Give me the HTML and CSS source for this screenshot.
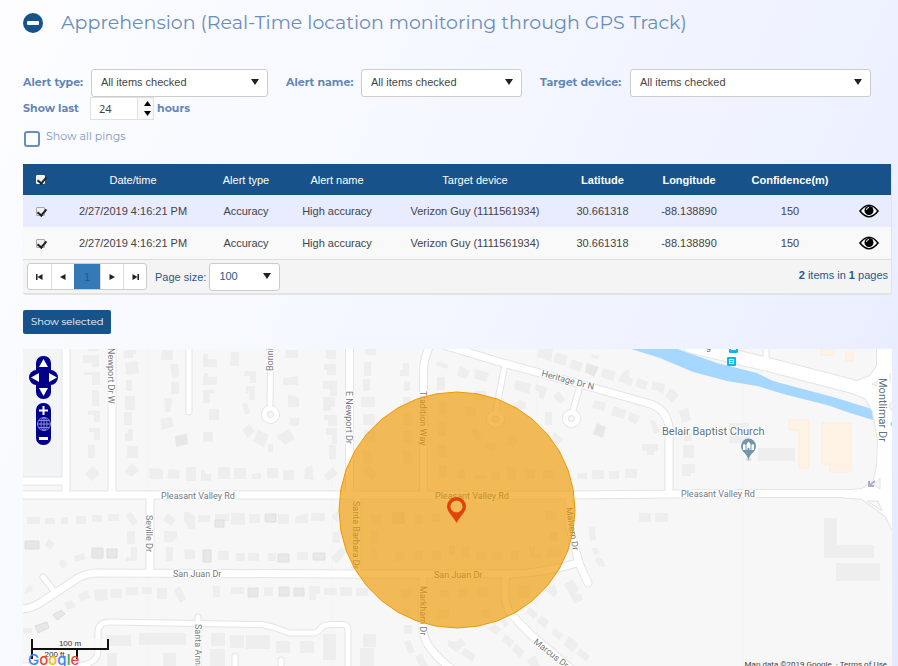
FILE: index.html
```html
<!DOCTYPE html>
<html lang="en">
<head>
<meta charset="utf-8">
<title>Apprehension</title>
<link rel="stylesheet" href="styles.css">
</head>
<body>
<header class="heading">
  <button class="collapse" type="button" aria-label="Collapse section">
    <svg width="20" height="20" viewBox="0 0 20 20"><circle cx="10" cy="10" r="10" fill="#15538a"/><rect x="4" y="8" width="12" height="4" rx="1" fill="#fff"/></svg>
  </button>
  <h1>Apprehension (Real-Time location monitoring through GPS Track)</h1>
</header>

<form class="filters">
  <div class="filter-row">
    <div class="field field-type">
      <label for="alert-type">Alert type:</label>
      <span class="select"><select id="alert-type"><option>All items checked</option></select></span>
    </div>
    <div class="field field-name">
      <label for="alert-name">Alert name:</label>
      <span class="select"><select id="alert-name"><option>All items checked</option></select></span>
    </div>
    <div class="field field-device">
      <label for="target-device">Target device:</label>
      <span class="select"><select id="target-device"><option>All items checked</option></select></span>
    </div>
  </div>
  <div class="last-row">
    <label for="hours">Show last</label>
    <input id="hours" type="text" inputmode="numeric" value="24">
    <span class="spinner">
      <button type="button" aria-label="Increase"><svg width="7" height="5" viewBox="0 0 7 5"><path d="M3.5 0 7 5H0z"/></svg></button>
      <button type="button" aria-label="Decrease"><svg width="7" height="5" viewBox="0 0 7 5"><path d="M0 0h7L3.5 5z"/></svg></button>
    </span>
    <span class="unit">hours</span>
  </div>
  <div class="ping-row">
    <input id="pings" type="checkbox">
    <label for="pings">Show all pings</label>
  </div>
</form>

<section class="grid">
  <table>
    <colgroup>
      <col class="c-check"><col class="c-date"><col class="c-type"><col class="c-name"><col class="c-device"><col class="c-lat"><col class="c-long"><col class="c-conf"><col class="c-view">
    </colgroup>
    <thead>
      <tr>
        <th><input class="tick" type="checkbox" checked aria-label="Select all"></th>
        <th>Date/time</th><th>Alert type</th><th>Alert name</th><th>Target device</th>
        <th class="strong">Latitude</th><th class="strong">Longitude</th><th class="strong">Confidence(m)</th><th></th>
      </tr>
    </thead>
    <tbody>
      <tr>
        <td><input class="tick" type="checkbox" checked aria-label="Select row 1"></td>
        <td>2/27/2019 4:16:21 PM</td><td>Accuracy</td><td>High accuracy</td><td>Verizon Guy (1111561934)</td>
        <td>30.661318</td><td>-88.138890</td><td>150</td>
        <td><button class="view" type="button" aria-label="View"><svg width="20" height="14" viewBox="0 0 20 14"><path d="M1 7Q10-4.5 19 7 10 18.5 1 7z" fill="#fff" stroke="#000" stroke-width="1.6"/><circle cx="10" cy="6.500" r="4.500"/><path d="M7.5 6a2.500 2.500 0 0 1 2.500-2.500" fill="none" stroke="#fff"/></svg></button></td>
      </tr>
      <tr>
        <td><input class="tick" type="checkbox" checked aria-label="Select row 2"></td>
        <td>2/27/2019 4:16:21 PM</td><td>Accuracy</td><td>High accuracy</td><td>Verizon Guy (1111561934)</td>
        <td>30.661318</td><td>-88.138890</td><td>150</td>
        <td><button class="view" type="button" aria-label="View"><svg width="20" height="14" viewBox="0 0 20 14"><path d="M1 7Q10-4.5 19 7 10 18.5 1 7z" fill="#fff" stroke="#000" stroke-width="1.6"/><circle cx="10" cy="6.500" r="4.500"/><path d="M7.5 6a2.500 2.500 0 0 1 2.500-2.500" fill="none" stroke="#fff"/></svg></button></td>
      </tr>
    </tbody>
  </table>
  <footer class="pager">
    <nav class="pages" aria-label="Pages">
      <button type="button" aria-label="First page"><svg width="7" height="6" viewBox="0 0 7 6"><path d="M0 0h1.500v6H0zM6.500 0v6L1.500 3z"/></svg></button>
      <button type="button" aria-label="Previous page"><svg width="6" height="6" viewBox="0 0 6 6"><path d="M5.500 0v6L0 3z"/></svg></button>
      <button type="button" class="current">1</button>
      <button type="button" aria-label="Next page"><svg width="6" height="6" viewBox="0 0 6 6"><path d="M.5 0v6L6 3z"/></svg></button>
      <button type="button" aria-label="Last page"><svg width="7" height="6" viewBox="0 0 7 6"><path d="M5.500 0H7v6H5.500zM.5 0v6L5.500 3z"/></svg></button>
    </nav>
    <label for="page-size">Page size:</label>
    <span class="select size"><select id="page-size"><option>100</option></select></span>
    <p class="total"><b>2</b> items in <b>1</b> pages</p>
  </footer>
</section>

<button class="show" type="button">Show selected</button>

<section class="map" aria-label="Map">
  <svg class="tiles" viewBox="23 349 869 317" preserveAspectRatio="xMinYMin slice">
    <defs>
      <g id="minor">
        <path d="M189 340V412M271 340 270 405M505 364 496 411M580 386 573 410M43 577 54 591M766 345V365M198 617V680M235 656V680M281 660V680"/>
        <path d="M23 666H72Q98 666 98 650V631Q99 622 110 622L262 624.500Q275 627 289 633H313Q318 633 322 627 325 624 335 624.500H344Q348 625 348 630V680"/>
      </g>
      <g id="major">
        <path d="M66 340V495M112 340V495M20 481H66M20 495H574L720 493.500H865M150 495V573M349.500 340V495M357 495V574M423.500 495V375Q423 360 430 345M569 495V525L579 563 588 583M669 493V428Q667 408 647 403L573 382 503 363 440 344"/>
        <path d="M20 609Q32 609 43 601L72 582Q83 573 98 573L350 574H510Q545 573 577 563M423 574V630Q424 650 460 675M506 574Q502 605 512 615L530 634 575 672"/>
      </g>
      <path id="avenue" d="M690 346 770 365 870 391"/>
      <path id="junction" d="M877 340V366L870 376 857 381 850 392 866 399 873 412 878 440 877 465 874 480 862 489 840 491V497L862 499 880 512 886 517 895 535V340z"/>
    </defs>
    <rect x="20" y="340" width="1400" height="900" fill="#f7f7f7"/>
    <path d="M23 340H62V477H23z" fill="#f2f4f6"/>
    <path d="M148 349V900M332 349V900M537 349V900M743 349V900" stroke="#f3f3f3"/>

    <g fill="#eee">
      <path d="M88 349h10v2H88zM83 355h16v12H92v-4h-9zM84 372h16v13h-8v-10h-8zM92 390h7v16h-7zM88 411h12v11h-6v-7h-6zM89 428h11v12h-6v-8h-5zM88 445h7v13h-7zM93 466l7 8-8 7-7-7z"/>
      <path d="M124 350h12v4h-3v4h-10zM125 363l13-2 1 12-13 2zM126 380h6v11h-6zM125 396h10v14H125zM124 412h8v13h-8zM128 429h5v12h-8v-8h3zM127 446h11v12h-11zM132 463l7 8-8 6-6-6zM149 468l14 1v10h-13zM169 469l11 1-1 9-12-1zM186 467h10v14h-10zM201 470h4v4h6v7h-10zM218 467h12v12h-12z"/>
      <path d="M162 350h11v10h-12zM170 364h8l1 13-7 1zM171 382h8v12h-8zM164 398h8v6l-2 8h-5zM160 419l11-2 3 9-12 4zM203 354h5v5h9v8h-14zM204 373h4v4h9v8h-14zM203 390h12v3h-5v10h-7zM209 409h10v11h-10zM203 432h10v10h-10z"/>
      <path d="M175 436l12-2 1 10-12 3z" fill="#e7e7e7"/>
      <path d="M231 352h8v14h-9zM245 371h11v12h-6v-7h-6zM246 386h9v14h-6v-7h-3zM242 404l5-1 3 10-5 2zM242 430l7-6 6 7-7 7zM258 430l11 5-5 12-11-6zM276 436l13-7 6 10-10 6zM290 418h9v6l-4 3-6-3zM268 444h5v8h-5zM286 350h12v8h-13zM283 378l15-2v9h-15zM288 395l11 2v10h-11z"/>
      <path d="M234 468h12v11h-12zM252 474l9-1v6h-9zM267 468h11v10h-11zM283 470h11v10h-11zM305 468l7-3 2 15-10-1zM324 475l9-8 5 7-10 7z"/>
      <path d="M326 350h10v9h-10zM324 364h12v11h-9v-5h-3zM323 381h14v15h-7v-7h-7zM323 397h12v10h-4v4h-8zM324 415h13v11h-9v-6h-4zM326 428h11v16h-5v-9h-6zM329 445h7v14h-7zM365 349h11v6h-10zM364 362h7v14h-7zM363 379h7v12h-7zM361 397h14v10h-14zM363 414h12v11h-12zM364 430h11v12h-11zM363 450h8v14h-8zM368 465l10 9-5 6-10-9zM403 363h6v13h-9v-6h3zM404 381l6 1v9h-6zM403 397h8v11h-8zM403 414h8v11h-8zM403 431h8v12h-8zM403 450h8v14h-8z"/>
      <path d="M437 361l12 4-2 4-11-4zM437 377h8v13h-8zM439 402h8v12h-8zM438 422h8v14h-8zM438 445h8v12h-8zM439 465h8v12h-8zM460 366l10 5-4 8-9-4zM475 369l14 4-3 9-12-4zM474 391h12v9h-12zM466 407h10v9h-10zM470 430l7-2 5 10-7 3zM486 442l11 2-3 7-9-2zM508 439l5-4 5 6-5 7-6-4zM516 380l15 4-2 10-15-5zM536 384l12 4-5 12-4-2v-6l-4-2zM553 396l6-5 6 9-5 4zM513 404l7-4 6 3v6h-14zM545 412h7v13h-7zM554 432l9 7-5 6-8-5z"/>
      <path d="M539 349h14l-2 12-14-4zM556 352l12 4-3 10-12-4zM572 359l11 4-3 9-11-4zM603 368l13 4-3 9-12-4zM623 372l7-3-1 8 4 2-2 7-13-5zM638 378l10 4-3 8-10-4zM653 381l12 3-2 9-12-4zM592 354l7 2v3l-8-1zM595 400l11 3-2 8-12-3zM614 406l13 4-4 9-12-4zM630 412l10 4-4 9-8-5zM650 420l5 1 5 11-6 2zM642 444h16v7h-4v4h-7v-4h-5z"/>
      <path d="M587 363l12 4-5 10-9-5zM597 423l9 4-3 11-10-4z" fill="#e7e7e7"/>
      <path d="M458 470h7v9h-7zM475 475h12v4h-12zM491 472h9v8h-9zM507 467h9v13h-9zM525 469h10v10h-10zM543 470h11v9h-11zM577 473h10v6h-10zM592 470h12v9h-12zM609 471h10v8h-10zM625 469h12v9h-12z"/>
      <path d="M671 388l8 7-7 8-7-7zM659 383l6 3-1 5-5-1zM679 411l9-3 3 12-9 3zM684 433h8v8h-8zM683 445h11v13h-11zM682 464h13v9h-4v3h-9zM729 423h20v20h-20zM758 448h37v13h-37z"/>
      <path d="M27 517h13v7H27zM45 518h10v6H45zM61 517h7v7h-7zM76 516h10v8H76zM92 515h10v7H92zM108 514h11v7h-11zM126 515l5-3 7 10-6 4zM127 531h8v13h-8zM131 547h6v14h-11v-4h5zM49 539l6 5-5 6-5-5zM62 559l6 5-5 4-5-4zM74 556l10-3 2 6-11 3zM26 589l5-4 2 5-8 4zM168 513l8 7-5 6-8-6zM184 512h6l5 5v12h-6l-5-9zM198 515h12v7h-12zM215 514h14v7h-14zM164 531h13v6l-4 5h-9zM166 547h7v14h-7zM184 549l11 1v9h-10zM218 551h11v9h-11z"/>
      <path d="M25 541h14v8H25zM92 548h11v10H92zM107 549h10v9h-10zM53 615l8-5 4 4-8 6zM35 626l12-4 2 6-11 5zM203 550h8v12h-8zM215 520h9v7h-9z" fill="#e7e7e7" stroke="#dedede"/>
      <path d="M64 603l8-3 4 7-9 3zM78 595l9-5 4 8-10 3zM94 590l13-1 1 11-13 1zM110 589h12v9h-11zM126 587h12v8h-12zM142 587h10v7h-10zM157 588h10v11h-10zM174 590l6-4 6 13-6 4zM213 586h7v11h-7zM23 628h9v5h-9zM106 635h25v11h-25zM139 633h47v12h-47zM211 633h14v13h-14zM210 649h15v17h-15zM107 653h10v13h-10zM163 653h13v13h-13z"/>
      <path d="M231 513h14v12h-14zM249 514h11v9h-11zM278 514h11v10h-11zM295 517l13-4v10h-13zM311 513h14v8h-14zM332 515l6-4v12l-6-5zM333 532h7v11h-7zM236 553h9v8h-9zM248 553h11v8h-11zM268 553h8v8h-8zM297 552h11v8h-11zM331 558l10-11 5 5-9 12zM371 515l10-2v12l-10-2zM370 530h8v14h-8zM370 548l5-1 3 12-5 1zM395 552h8v9h-8zM414 551h9v9h-9zM432 551h9v9h-9zM415 515h8v9h-8zM432 513h8v9h-8z"/>
      <path d="M265 514h11v8h-11zM278 554h11v8h-11zM313 553h12v7h-12zM248 588h10v9h-10zM279 587h10v9h-10zM294 588h10v8h-10zM393 513h11v10h-11z" fill="#e8e8e8" stroke="#e0e0e0"/>
      <path d="M231 587h13v7h-13zM264 587h9v9h-9zM309 586h11v8h-4v6h-7zM324 588h13v7h-13zM340 587h12v9h-12zM356 588h12v8h-12zM230 635h14v13h-14zM246 635h24v14h-24zM276 641h14v12h-14zM300 641h14v12h-14zM323 634h13v26h-13zM363 634h13v13h-13zM360 648h14v18h-14zM404 625h8v9h-8zM404 642l6-2 5 12-6 2zM415 657l7-3 6 12h-8zM401 589h10v9h-10zM402 609h9v9h-9zM440 590h9v7h-9zM458 589h9v9h-9zM477 587h11v10h-11zM437 609h12v10h-12zM480 610l9-2 3 10-10 1z"/>
      <path d="M449 545h6v10h-6zM462 546h7v12h-7zM476 552h10v8h-10zM493 552h9v8h-9zM511 551h8v9h-8zM529 546h6v8h6v4h-12zM545 511h10v9h-10zM550 532h8v9h-8zM548 548h14v9h-16zM589 527h6l1 13-6 1zM592 548h5l3 5-6 2zM597 557l5 2 4 8-7-1-4-5zM518 585h12v13h-12zM544 590l10-6 4 8-4 5zM564 585l8-6 7 10-4 5h6l2 6-9 4-4-9z"/>
      <path d="M530 607l8 7-4 5-8-7zM541 615l8 6-4 8-8-7zM555 628l8 7-4 5-8-7zM569 636l10 8-6 8-10-7zM580 648l10 8-4 5-10-7zM486 628l9-4 6 5-4 6zM505 634l9 7-4 7-8-8zM516 644l9 7-5 7-8-8zM448 640l8 2 5-4 5 6-10 8-8-6zM465 648l11 7-4 7-11-8zM501 621l4-2 4 5-4 4zM527 660l8-5 5 11h-10zM639 513h12v9h-12zM655 513h13v9h-13z"/>
      <path d="M824 518h13v27h37v13h-50zM836 563h44v18h-44z"/>
    </g>
    <path d="M789 420h20v48H799V430H789zM822 423h29v49h-21v-8h-8zM821 349h13v6h-13zM846 352h7v9h-7z" fill="#fff3e6" stroke="#fdecd9"/>

    <path d="M625 347 672 347 717 363 757 373 773 381 803 389 833 397 872 409 873 420 850 413 827 405 787 395 757 386 727 381 693 372 660 358z" fill="#a6d8ff"/>

    <g fill="none" stroke="#e4e4e4" stroke-linecap="round" stroke-linejoin="round">
      <use href="#minor" stroke-width="7"/><use href="#major" stroke-width="9"/><use href="#avenue" stroke-width="15"/>
      <use href="#junction" stroke-width="2"/>
      <circle cx="270.500" cy="414.500" r="9"/><circle cx="495.500" cy="419" r="9"/><circle cx="571.500" cy="418.500" r="9"/>
    </g>
    <g fill="none" stroke="#fff" stroke-linecap="round" stroke-linejoin="round">
      <use href="#minor" stroke-width="5"/><use href="#major" stroke-width="7"/><use href="#avenue" stroke-width="13"/>
    </g>
    <use href="#junction" fill="#fff"/>
    <g fill="none" stroke="#fff" stroke-width="5"><circle cx="270.500" cy="414.500" r="6"/><circle cx="495.500" cy="419" r="6"/><circle cx="571.500" cy="418.500" r="6"/></g>
    <g fill="#f7f7f7" stroke="#e2e2e2"><circle cx="270.500" cy="414.500" r="3"/><circle cx="495.500" cy="419" r="3"/><circle cx="571.500" cy="418.500" r="3"/><path d="M872 384l5-3v5zM880 478l-6 7 6 4zM867 501h11l4 10zM890 373v10M892 402l-3 4 3 5"/></g>
    <path d="M875 481l-6 5M869 481v5h5" stroke="#a9acc9" stroke-width="2" fill="none"/>
    <path d="M890 424l2-3v6z" fill="#a6d8ff"/>

    <g class="street">
      <text x="161" y="499">Pleasant Valley Rd</text>
      <text x="435" y="499">Pleasant Valley Rd</text>
      <text x="681" y="497">Pleasant Valley Rd</text>
      <text x="173" y="577">San Juan Dr</text>
      <text x="434" y="578">San Juan Dr</text>
      <text transform="translate(108 348) rotate(90)">Newport Dr W</text>
      <text transform="translate(273 371) rotate(-90)">Bonnie</text>
      <text transform="translate(346 391) rotate(90)">E Newport Dr</text>
      <text transform="translate(420 391) rotate(90)">Tradition Way</text>
      <text transform="translate(541 376) rotate(15)">Heritage Dr N</text>
      <text transform="translate(146 515) rotate(90)">Seville Dr</text>
      <text transform="translate(353 501) rotate(90)">Santa Barbara Dr</text>
      <text transform="translate(566 508) rotate(81)">Malvern Dr</text>
      <text transform="translate(420 586) rotate(90)">Markham Dr</text>
      <text transform="translate(195 624) rotate(90)">Santa Anna</text>
      <text transform="translate(533 643) rotate(38)">Marcus Dr</text>
      <text x="706" y="350">g</text>
      <text class="wide" transform="translate(879 378) rotate(90)">Montlimar Dr</text>
      <text class="wide" x="662" y="435">Belair Baptist Church</text>
    </g>

    <g fill="#12b5ee"><rect x="727" y="357" width="9" height="9" rx="1"/><rect x="729" y="344" width="9" height="9" rx="1"/></g>
    <path d="M729.500 359.500h4v4h-4zM729 361.500h5M731 349.500h5" fill="none" stroke="#fff"/>
    <ellipse cx="748.500" cy="459.500" rx="3" ry="1.500" fill="#dedede"/>
    <path d="M748.500 460C747 453 741 452 741 446a7.500 7.500 0 0 1 15 0c0 6-6 7-7.500 14z" fill="#7397aa"/>
    <path d="M743 450v-5l1-1 1.500 1v5zM746.500 450v-6l2-2.500 2 2.500v6h-1v-2h-2v2zM751.500 450v-5l1.500-1 1 1v5z" fill="#fff"/>

    <polygon transform="translate(457 510)" fill="#e90" fill-opacity=".65" stroke="#e90" points="0,-118 20.500,-116.200 40.400,-110.900 59,-102.200 75.800,-90.400 90.400,-75.800 102.200,-59 110.900,-40.400 116.200,-20.500 118,0 116.200,20.500 110.900,40.400 102.200,59 90.400,75.800 75.800,90.400 59,102.200 40.400,110.900 20.500,116.200 0,118 -20.500,116.200 -40.400,110.900 -59,102.200 -75.800,90.400 -90.400,75.800 -102.200,59 -110.900,40.400 -116.200,20.500 -118,0 -116.200,-20.500 -110.900,-40.400 -102.200,-59 -90.400,-75.800 -75.800,-90.400 -59,-102.200 -40.400,-110.900 -20.500,-116.200"/>
    <path d="M456.500 523C453 516 447 512 447 506.500a9.500 9.500 0 0 1 19 0C466 512 460 516 456.500 523zM456.500 500.500a6 6 0 1 0 0 12 6 6 0 0 0 0-12z" fill="#e2420b" fill-rule="evenodd"/>
  </svg>

  <div class="pan">
    <button class="up" type="button" aria-label="Pan up"><svg width="9" height="8" viewBox="0 0 9 8"><path d="M4.500 0 9 8H0z"/></svg></button>
    <button class="left" type="button" aria-label="Pan left"><svg width="8" height="9" viewBox="0 0 8 9"><path d="M0 4.500 8 0v9z"/></svg></button>
    <span class="hub"></span>
    <button class="right" type="button" aria-label="Pan right"><svg width="8" height="9" viewBox="0 0 8 9"><path d="M8 4.500 0 0v9z"/></svg></button>
    <button class="down" type="button" aria-label="Pan down"><svg width="9" height="8" viewBox="0 0 9 8"><path d="M4.500 8 9 0H0z"/></svg></button>
  </div>
  <div class="zoom">
    <button type="button" aria-label="Zoom in"><svg width="9" height="9" viewBox="0 0 9 9"><path d="M3.500 0h2v3.500H9v2H5.500V9h-2V5.500H0v-2h3.500z"/></svg></button>
    <button type="button" aria-label="Full extent"><svg width="14" height="14" viewBox="0 0 14 14"><g class="globe"><circle cx="7" cy="7" r="6.500"/><ellipse cx="7" cy="7" rx="3" ry="6.500"/><path d="M7 .5v13M.5 7h13M2 3.500h10M2 10.500h10"/></g></svg></button>
    <button type="button" aria-label="Zoom out"><svg width="9" height="3" viewBox="0 0 9 3"><path d="M0 0h9v3H0z"/></svg></button>
  </div>
  <div class="scale">
    <span class="metric">100 m</span>
    <span class="imperial">200 ft</span>
  </div>
  <div class="logo"><span class="b">G</span><span class="r">o</span><span class="y">o</span><span class="b">g</span><span class="g">l</span><span class="r">e</span></div>
  <div class="credit">Map data ©2019 Google &nbsp;· <a href="#terms">Terms of Use</a></div>
</section>
</body>
</html>
```
FILE: styles.css
```css
* {
  box-sizing: border-box;
}

body {
  display: flex;
  flex-direction: column;
  height: 100vh;
  margin: 0;
  padding: 0 6px 0 23px;
  overflow: hidden;
  background: linear-gradient(115deg, #fdfdff 0%, #f4f7ff 45%, #eef1ff 75%, #e4eaff 100%);
  color: #444;
  font: 11px/16px "Liberation Sans", Arial, sans-serif;
}

button,
input,
select {
  margin: 0;
  padding: 0;
  border: 0;
  color: inherit;
  font: inherit;
}

button {
  display: flex;
  align-items: center;
  justify-content: center;
  background: none;
}

label,
.unit {
  color: #5f86b7;
}

.heading {
  display: flex;
  align-items: center;
  gap: 18px;
  height: 46px;
}

.heading h1 {
  margin: 0;
  color: #6a8dbb;
  font: 400 19px/28px Montserrat, Inter, sans-serif;
  white-space: nowrap;
}

.filters {
  padding-top: 23px;
  font-family: Montserrat, Inter, sans-serif;
  font-size: 11px;
}

.filter-row {
  display: flex;
  gap: 18px;
  padding-right: 21px;
}

.field {
  display: flex;
  align-items: center;
  flex-basis: 0;
}

.field label,
.last-row label,
.unit {
  font-weight: 700;
  white-space: nowrap;
}

.field label {
  flex: none;
  width: 68px;
  padding-bottom: 2px;
}

.field-type { flex-grow: 245; }
.field-name { flex-grow: 236; }
.field-device { flex-grow: 331; }
.field-name label { width: 75px; }
.field-device label { width: 90px; }

.select {
  position: relative;
  flex: 1;
}

.select::after {
  content: "";
  position: absolute;
  top: 10px;
  right: 9px;
  border: 4px solid transparent;
  border-top: 6px solid #222;
  border-bottom: 0;
  pointer-events: none;
}

select {
  display: block;
  width: 100%;
  height: 28px;
  padding: 0 9px 2px;
  appearance: none;
  border: 1px solid #ccc;
  border-radius: 3px;
  background: #fff;
  color: #444;
  font: 11px/16px "Liberation Sans", Arial, sans-serif;
}

.last-row {
  display: flex;
  align-items: center;
  height: 23px;
}

.last-row label {
  width: 67px;
  padding-bottom: 2px;
}

.last-row input {
  width: 48px;
  height: 23px;
  padding-left: 8px;
  border: 1px solid #e0e0e0;
  background: #fff;
  font: 11px/16px "Noto Sans", sans-serif;
}

.spinner {
  display: flex;
  flex-direction: column;
  justify-content: center;
  gap: 5px;
  width: 16px;
  height: 23px;
  padding-left: 3px;
  border: 1px solid #e0e0e0;
  border-left: 0;
  background: #f8f8f8;
}

.unit {
  padding: 0 0 2px 3px;
}

.ping-row {
  display: flex;
  align-items: flex-start;
  gap: 6px;
  padding: 8px 0 0 1px;
}

.ping-row input {
  width: 16px;
  height: 16px;
  margin-top: 3px;
  appearance: none;
  border: 2px solid #6a8dbb;
  border-radius: 3px;
}

.ping-row label {
  color: #7b9ac4;
}

.grid {
  margin-top: 17px;
  border: 1px solid #e3e3e6;
  border-width: 0 1px 2px 0;
  border-radius: 0 0 3px 3px;
  background: #f4f4f4;
}

table {
  width: 100%;
  border-collapse: collapse;
  table-layout: fixed;
}

.c-check { width: 35px; }
.c-date { width: 150px; }
.c-type { width: 76px; }
.c-name { width: 106px; }
.c-device { width: 170px; }
.c-lat { width: 85px; }
.c-long { width: 88px; }
.c-conf { width: 114px; }
.c-view { width: 44px; }

th,
td {
  height: 32px;
  padding: 0;
  text-align: center;
  white-space: nowrap;
}

th {
  height: 31px;
  background: #17538a;
  color: #fff;
  font-weight: 400;
}

th.strong {
  font-weight: 700;
}

tbody tr {
  background: #f9f9f9;
}

tbody tr:first-child {
  background: #e9ebff;
}

.tick {
  display: block;
  position: relative;
  width: 9px;
  height: 9px;
  margin: 0 auto;
  appearance: none;
  border: 1px solid #aaa;
  border-radius: 1px;
  background: #eee;
}

th .tick {
  border-color: #fff;
}

.tick:checked::after {
  content: "";
  position: absolute;
  top: -1px;
  left: 2px;
  width: 4px;
  height: 7px;
  border: solid #222;
  border-width: 0 2px 2px 0;
  transform: rotate(40deg);
}

.view {
  margin: 0 auto;
}

.pager {
  display: flex;
  align-items: center;
  height: 34px;
  padding: 0 3px 0 4px;
  border-top: 1px solid #ddd;
  color: #24598e;
}

.pages {
  display: flex;
  height: 27px;
  margin-right: 8px;
  border: 1px solid #ccc;
  border-radius: 3px;
  background: #fff;
}

.pages button {
  width: 23px;
  border-left: 1px solid #ddd;
  fill: #222;
}

.pages button:first-child {
  border-left: 0;
}

.pages .current {
  width: 26px;
  border: 0;
  background: #337ab7;
  color: #24598e;
}

.pager label {
  color: #24598e;
}

.pager .size {
  flex: none;
  width: 71px;
  margin-left: 3px;
}

.size select {
  color: #24598e;
}

.total {
  margin: 0 0 0 auto;
  padding-bottom: 3px;
}

.show {
  align-self: flex-start;
  height: 24px;
  margin: 15px 0;
  padding: 0 8px;
  border-radius: 2px;
  background: #17538a;
  color: #fff;
  font: 10px/16px Montserrat, Inter, sans-serif;
}

.map {
  position: relative;
  flex: 1;
  min-height: 0;
  overflow: hidden;
  background: #f7f7f7;
}

.tiles {
  display: block;
  width: 100%;
  height: 100%;
}

.street text {
  fill: #74797d;
  stroke: #fff;
  stroke-width: 2px;
  paint-order: stroke;
  font: 9px Roboto, sans-serif;
}

.street .wide {
  fill: #5f7480;
  font-size: 11px;
}

.pan,
.zoom {
  position: absolute;
  fill: #fff;
}

.pan button,
.zoom button,
.hub {
  background: #00008b;
}

.pan {
  top: 7px;
  left: 6px;
  display: grid;
  grid-template: 14px 15px 14px / 11px 7px 11px;
}

.pan .up,
.pan .down {
  grid-column: 1 / 4;
  justify-self: center;
  width: 15px;
}

.pan .up { border-radius: 7px 7px 0 0; }
.pan .down { border-radius: 0 0 7px 7px; }
.pan .left { border-radius: 8px 0 0 8px; }
.pan .right { border-radius: 0 8px 8px 0; }

.zoom {
  top: 54px;
  left: 13px;
  width: 15px;
  border-radius: 7px;
  overflow: hidden;
}

.zoom button {
  width: 15px;
  height: 14px;
}

.globe {
  fill: none;
  stroke: #8d8dd8;
}

.scale {
  position: absolute;
  bottom: 7px;
  left: 8px;
  width: 78px;
  color: #333;
  font: 8px/10px "Liberation Sans", Arial, sans-serif;
  text-align: center;
}

.metric,
.imperial {
  display: block;
  height: 11px;
  border: solid #111;
  border-width: 0 2px 2px;
  background: rgba(247, 247, 247, 0.8);
}

.imperial {
  width: 47px;
  height: 9px;
  border-bottom: 0;
}

.logo {
  position: absolute;
  bottom: -4px;
  left: 5px;
  font: 500 15px/20px Inter, sans-serif;
}

.logo .b { color: #4285f4; }
.logo .r { color: #ea4335; }
.logo .y { color: #fbbc05; }
.logo .g { color: #34a853; }

.credit {
  position: absolute;
  right: 0;
  bottom: -5px;
  padding: 0 5px 0 3px;
  background: rgba(245, 245, 245, 0.8);
  color: #444;
  font: 8px/12px Roboto, sans-serif;
}

.credit a {
  color: inherit;
  text-decoration: none;
}
```
